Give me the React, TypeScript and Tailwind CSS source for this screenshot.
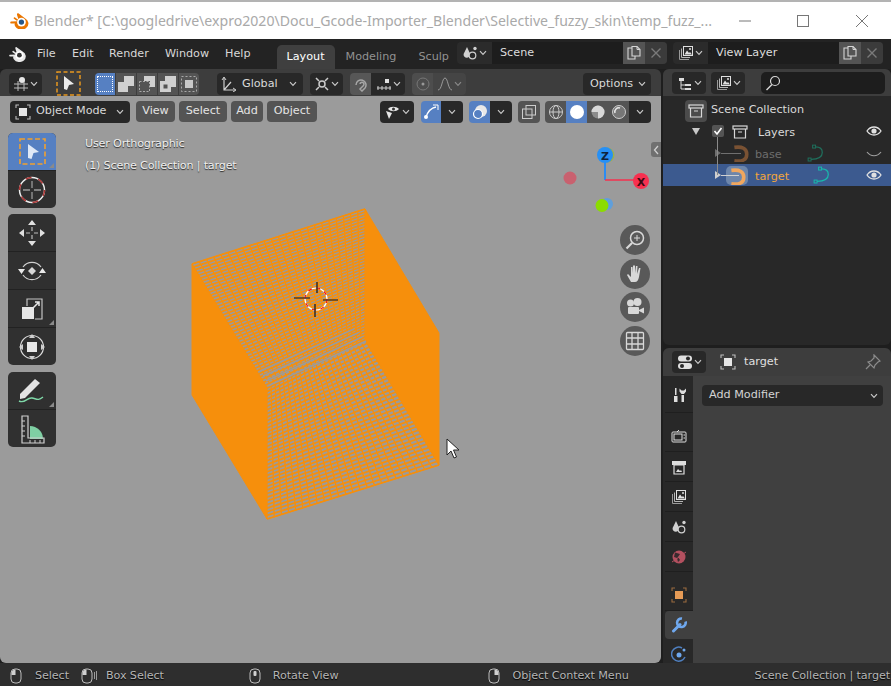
import type { ReactNode } from 'react';

type P = [number, number];

// hatch lines between two opposite edges of a quad
function hatch(a: P, b: P, c: P, d: P, n: number) {
  let s = '';
  for (let i = 0; i <= n; i++) {
    const t = i / n;
    s += `M${a[0] + (d[0] - a[0]) * t} ${a[1] + (d[1] - a[1]) * t}L${b[0] + (c[0] - b[0]) * t} ${b[1] + (c[1] - b[1]) * t}`;
  }
  return s;
}

function Ico({ children, size = 16, className = '' }: { children: ReactNode; size?: number; className?: string }) {
  return (
    <svg width={size} height={size} viewBox="0 0 16 16" fill="none" className={`shrink-0 ${className}`}>
      {children}
    </svg>
  );
}

function Chev({ color = '#c8c8c8' }: { color?: string }) {
  return (
    <svg width="8" height="6" viewBox="0 0 8 6" fill="none" className="shrink-0">
      <path d="M1 1.2 4 4.4 7 1.2" stroke={color} strokeWidth="1.2" />
    </svg>
  );
}

function BlenderLogo({ color, eye, size = 22 }: { color: string; eye: string; size?: number }) {
  return (
    <svg width={size} height={size * 0.8} viewBox="0 0 25 20" className="shrink-0">
      <path d="M9.5 1.5 17 7a8 7 0 1 1-11 9.5C5 15 5 14 5.6 13L1 13c-1 0-1-2 0-2.2l7.5-.2L4.5 7.8C3.6 7 4.6 5.6 5.7 6.2L9.8 9l-1.8-5.6C7.6 2 8.6 1 9.5 1.5Z" fill={color} />
      <circle cx="13" cy="11.5" r="5" fill="#fff" />
      <circle cx="13" cy="11.5" r="3" fill={eye} />
    </svg>
  );
}

function ObjectIcon({ fill = '#e6e6e6', corner = '#bdbdbd' }: { fill?: string; corner?: string }) {
  return (
    <Ico>
      <rect x="4" y="4" width="8" height="8" fill={fill} />
      <path d="M1 4V1h3M12 1h3v3M15 12v3h-3M4 15H1v-3" stroke={corner} strokeWidth="1.1" />
    </Ico>
  );
}

function ImageStack() {
  return (
    <Ico>
      <path d="M1.5 5v9.5H11" stroke="#9a9a9a" />
      <path d="M3.5 3.5v9h8.5" stroke="#b5b5b5" />
      <rect x="5.5" y="1.5" width="9" height="9" stroke="#e0e0e0" fill="#2a2a2a" />
      <path d="M6.5 9.5 9 5.5l2 2.5 1-1 2 2.5Z" fill="#e0e0e0" />
      <circle cx="12" cy="4" r="1" fill="#e0e0e0" />
    </Ico>
  );
}

function SceneIcon() {
  return (
    <Ico>
      <path d="M5 2 8 8.5A3.3 3.3 0 1 1 1.6 9Z" fill="#d0d0d0" />
      <circle cx="10.5" cy="10.5" r="3.3" stroke="#d0d0d0" strokeWidth="1.2" fill="#2a2a2a" />
      <circle cx="13" cy="3.5" r="1.7" fill="#d0d0d0" />
    </Ico>
  );
}

function CopyIcon() {
  return (
    <Ico>
      <path d="M6 3H2v11h7v-3" stroke="#d6d6d6" strokeWidth="1.1" />
      <path d="M6 1.5h5l3 3V11H6Z" stroke="#d6d6d6" strokeWidth="1.1" />
      <path d="M11 1.5v3h3" stroke="#d6d6d6" />
    </Ico>
  );
}

function CloseIcon() {
  return (
    <svg width="10" height="10" viewBox="0 0 10 10" fill="none">
      <path d="M0.5 0.5 9.5 9.5M9.5 0.5 0.5 9.5" stroke="#7a7a7a" strokeWidth="1.4" />
    </svg>
  );
}

function Eye({ color = '#e0e0e0' }: { color?: string }) {
  return (
    <Ico>
      <path d="M1 8c2-3 4.2-4 7-4s5 1 7 4c-2 3-4.2 4-7 4s-5-1-7-4Z" stroke={color} strokeWidth="1.3" />
      <circle cx="8" cy="8" r="2.6" fill={color} />
    </Ico>
  );
}

function CollectionBox({ color = '#d8d8d8' }: { color?: string }) {
  return (
    <Ico>
      <rect x="1" y="2" width="14" height="3" stroke={color} strokeWidth="1.2" />
      <path d="M2.5 5v9h11V5M6 8h4" stroke={color} strokeWidth="1.2" />
    </Ico>
  );
}

function Curve({ color }: { color: string }) {
  return (
    <Ico size={18}>
      <rect x="5" y="1" width="2.6" height="2.6" stroke={color} strokeWidth="0.9" />
      <rect x="1" y="12.5" width="2.6" height="2.6" stroke={color} strokeWidth="0.9" />
      <path d="M7.6 2.5c5 0 6 2 6 5 0 4-4 6-10 6.2" stroke={color} strokeWidth="1.1" />
    </Ico>
  );
}

function CurveObj({ color }: { color: string }) {
  return (
    <Ico size={18}>
      <path d="M3 3c7-1 11 1 11 6s-4 7-11 6" stroke={color} strokeWidth="3.2" />
    </Ico>
  );
}

function Dark({ className = '', children }: { className?: string; children: ReactNode }) {
  return <div className={`flex items-center h-[22px] rounded-[4px] bg-[#282828] text-[#d9d9d9] ${className}`}>{children}</div>;
}

function MenuBtn({ label, w }: { label: string; w: string }) {
  return <div className={`flex items-center justify-center h-[21px] rounded-[4px] bg-[#545454] text-[#e4e4e4] ${w}`}>{label}</div>;
}

function ModeBtn({ children, active }: { children: ReactNode; active?: boolean }) {
  return (
    <div className={`flex items-center justify-center w-[20px] h-[22px] ${active ? 'bg-[#5680c2]' : 'bg-[#545454]'}`}>{children}</div>
  );
}

function ToolCell({ children, active, corner }: { children: ReactNode; active?: boolean; corner?: boolean }) {
  return (
    <div className={`relative flex items-center justify-center h-[38px] last:h-[37px] border-b border-[#222] last:border-b-0 ${active ? 'bg-[#5680c2]' : ''}`}>
      {children}
      {corner && <span className="absolute right-[2px] bottom-[2px] w-0 h-0 border-l-[5px] border-l-transparent border-b-[5px] border-b-[#8a8a8a]" />}
    </div>
  );
}

function NavBtn({ children }: { children: ReactNode }) {
  return <div className="flex items-center justify-center w-[30px] h-[30px] rounded-full bg-[#595959]">{children}</div>;
}

function Row({ children, selected, text }: { children: ReactNode; selected?: boolean; text?: string }) {
  return (
    <div className={`relative h-[22px] flex items-center ${selected ? 'bg-[#3c5a8f]' : ''} ${text ?? ''}`}>{children}</div>
  );
}

function Tab({ children, active, h = 'h-[30px]', pt = '' }: { children: ReactNode; active?: boolean; h?: string; pt?: string }) {
  return (
    <div className={`flex items-center justify-center ml-[2px] ${h} ${pt} ${active ? 'bg-[#404040] rounded-l-[4px]' : 'border-b border-[#1f1f1f]'}`}>
      {children}
    </div>
  );
}

function Mouse({ side }: { side: 'l' | 'm' | 'r' }) {
  return (
    <svg width="12" height="16" viewBox="0 0 12 16" fill="none" className="shrink-0">
      <rect x="1" y="1" width="10" height="14" rx="4" stroke="#bdbdbd" />
      {side === 'l' && <path d="M1.5 7V5a4 4 0 0 1 4-3.5V7Z" fill="#d0d0d0" />}
      {side === 'r' && <path d="M10.5 7V5a4 4 0 0 0-4-3.5V7Z" fill="#d0d0d0" />}
      {side === 'm' && <rect x="4.5" y="3" width="3" height="5" rx="1" fill="#d0d0d0" />}
    </svg>
  );
}

const orange = '#f68f0c';
const shadow = '[text-shadow:0_1px_1px_#000]';

function Cube() {
  const tl: P = [192, 264];
  const t: P = [365, 209];
  const mr: P = [365, 340];
  const c: P = [267, 388];
  const r: P = [439, 465];
  const b: P = [267, 519];
  return (
    <svg className="absolute left-0 top-0 pointer-events-none" width="661" height="567" viewBox="0 96 661 567">
      <path d={hatch(tl, t, mr, c, 44)} stroke={orange} strokeWidth="1.7" />
      <path d={hatch(c, mr, r, b, 36)} stroke={orange} strokeWidth="1.7" />
      <path d={hatch(tl, c, mr, t, 24)} stroke={orange} strokeWidth="1.3" />
      <path d={hatch(c, b, r, mr, 24)} stroke={orange} strokeWidth="1.3" />
      <polygon points="192,264 267,388 267,519 192,395" fill={orange} />
      <polygon points="365,209 439,333 439,465 365,340" fill={orange} />
      <path d="M268 386 366 341M266 381 362 337M263 376 358 333M260 371 354 329" stroke="#9b9b9b" strokeWidth="1.6" />
      <path d="M192 264 365 209 439 333 439 465 267 519 192 395Z" stroke={orange} strokeWidth="1" fill="none" />
    </svg>
  );
}

function Cursor3D() {
  return (
    <svg className="absolute left-[292px] top-[179px]" width="48" height="48" viewBox="0 0 48 48" fill="none">
      <circle cx="24" cy="24" r="11" stroke="#fff" strokeWidth="1.2" />
      <circle cx="24" cy="24" r="11" stroke="#f01010" strokeWidth="1.2" strokeDasharray="4 4.64" />
      <path d="M2 23h16M31 25h15M25 7v11M23 29v13" stroke="#111" strokeWidth="1.2" />
    </svg>
  );
}

function Gizmo() {
  return (
    <svg className="absolute left-[555px] top-[44px]" width="100" height="80" viewBox="555 140 100 80" fill="none">
      <circle cx="570" cy="178" r="6.5" fill="#c9616f" />
      <circle cx="607" cy="204" r="6" fill="#5f9fdc" />
      <circle cx="607" cy="155" r="7.5" fill="#9cb14c" />
      <path d="M605 180V160" stroke="#2b8cf4" strokeWidth="2" />
      <path d="M605 180H635" stroke="#f6304e" strokeWidth="1.6" />
      <circle cx="605" cy="155" r="8" fill="#2790f5" />
      <circle cx="641" cy="181" r="8" fill="#f7304f" />
      <circle cx="602" cy="205.5" r="6.5" fill="#8bdc00" />
      <text x="605" y="159.5" textAnchor="middle" fontSize="11" fontWeight="700" fill="#10233c" fontFamily="DejaVu Sans, sans-serif">Z</text>
      <text x="641" y="185.5" textAnchor="middle" fontSize="11" fontWeight="700" fill="#3d0a12" fontFamily="DejaVu Sans, sans-serif">X</text>
    </svg>
  );
}

export default function App() {
  return (
    <div className="w-[891px] h-[686px] overflow-hidden flex flex-col bg-[#1e1e1e] font-['DejaVu_Sans',sans-serif] text-[11.2px] text-[#d9d9d9]">
      {/* window title bar */}
      <div className="h-[39px] shrink-0 border-t-2 border-[#b3b3b3] bg-white flex items-center pl-[10px] font-['Noto_Sans',sans-serif] text-[14.1px] text-[#a9a9a9]">
        <BlenderLogo color="#ea7600" eye="#265787" />
        <span className="ml-[2px] w-[701px] whitespace-nowrap">
          Blender* [C:\googledrive\expro2020\Docu_Gcode-Importer_Blender\Selective_fuzzy_skin\temp_fuzz_...
        </span>
        <svg className="ml-[4px]" width="130" height="16" viewBox="0 0 130 16" fill="none" stroke="#777">
          <path d="M0 8H12" />
          <rect x="58.5" y="2.5" width="11" height="11" />
          <path d="M117 2 129 14M129 2 117 14" />
        </svg>
      </div>

      {/* top bar */}
      <div className="h-[30px] shrink-0 bg-[#232323] flex items-center relative">
        <div className="ml-[9px] w-[20px]"><BlenderLogo color="#e8e8e8" eye="#333" size={20} /></div>
        <div className="flex items-center ml-[8px] text-[#d8d8d8]">
          <span className="w-[35px]">File</span>
          <span className="w-[37px]">Edit</span>
          <span className="w-[56px]">Render</span>
          <span className="w-[60px]">Window</span>
          <span>Help</span>
        </div>
        <div className="ml-[26px] self-end flex items-center h-[24px] w-[58px] justify-center rounded-t-[5px] bg-[#3f3f3f] text-white">Layout</div>
        <div className="self-end flex items-center h-[24px] ml-[11px] text-[#929292]">Modeling</div>
        <div className="self-end flex items-center h-[24px] ml-[22px] w-[31px] overflow-hidden text-[#929292]">Sculp</div>
        <div className="absolute left-[457px] top-[3px] h-[22px] w-[210px] flex items-center rounded-[4px] bg-[#2b2b2b]">
          <div className="w-[35px] flex items-center justify-center gap-[1px]"><SceneIcon /><Chev /></div>
          <div className="flex-1 h-full bg-[#1d1d1d] flex items-center pl-[8px] text-[#dcdcdc]">Scene</div>
          <div className="w-[22px] h-full bg-[#545454] flex items-center justify-center"><CopyIcon /></div>
          <div className="w-[22px] h-full bg-[#3b3b3b] rounded-r-[4px] flex items-center justify-center"><CloseIcon /></div>
        </div>
        <div className="absolute left-[673px] top-[3px] h-[22px] w-[210px] flex items-center rounded-[4px] bg-[#2b2b2b]">
          <div className="w-[35px] flex items-center justify-center gap-[1px]"><ImageStack /><Chev /></div>
          <div className="flex-1 h-full bg-[#1d1d1d] flex items-center pl-[8px] text-[#dcdcdc]">View Layer</div>
          <div className="w-[22px] h-full bg-[#545454] flex items-center justify-center"><CopyIcon /></div>
          <div className="w-[22px] h-full bg-[#3b3b3b] rounded-r-[4px] flex items-center justify-center"><CloseIcon /></div>
        </div>
      </div>

      <div className="flex-1 flex min-h-0 gap-[2px]">
        {/* 3d viewport */}
        <div className="w-[661px] flex flex-col rounded-[6px] overflow-hidden">
          <div className="h-[27px] shrink-0 bg-[#3d3d3d] flex items-center pl-[9px] pt-[3px]">
            <Dark className="w-[33px] justify-center gap-[1px]">
              <Ico>
                <path d="M1 8h14M1 12h14M5 5v10M11 5v10" stroke="#bbb" />
                <circle cx="9" cy="4" r="3" fill="#e6e6e6" />
              </Ico>
              <Chev />
            </Dark>
            <svg className="ml-[14px] -mt-[2px]" width="25" height="25" viewBox="0 0 25 25" fill="none">
              <rect x="1" y="1" width="23" height="23" stroke="#e8981f" strokeWidth="1.5" strokeDasharray="4 2.5" />
              <path d="M8 5 18 13 13 14 11 19 8 18Z" fill="#ececec" />
            </svg>
            <div className="ml-[14px] flex rounded-[4px] overflow-hidden gap-[1px]">
              <ModeBtn active><span className="w-[16px] h-[16px] border border-dotted border-white" /></ModeBtn>
              <ModeBtn><Ico><path d="M0 6h6V0h10v10H10v6H0Z" fill="#d0d0d0" /></Ico></ModeBtn>
              <ModeBtn><Ico><path d="M5 0h11v11H11V5H5Z" fill="#d0d0d0" /><rect x="0.5" y="5.5" width="10" height="10" stroke="#aaa" strokeDasharray="2 1.5" /></Ico></ModeBtn>
              <ModeBtn><Ico><path d="M5 0h11v11H11V5H5Z" fill="#d0d0d0" /><path d="M0 5h11v11H0ZM3.5 8.5v4h4v-4Z" fill="#d0d0d0" fillRule="evenodd" /></Ico></ModeBtn>
              <ModeBtn><Ico><rect x="0.5" y="0.5" width="15" height="15" stroke="#aaa" strokeDasharray="2 2" /><rect x="4" y="4" width="8" height="8" fill="#c8c8c8" /></Ico></ModeBtn>
            </div>
            <Dark className="ml-[18px] w-[86px] pl-[4px] pr-[6px]">
              <Ico><path d="M3 2v12h11M3 14l7-8" stroke="#cfcfcf" strokeWidth="1.2" /><path d="M1 4l2-3 2 3M12 12l3 2-3 2" stroke="#cfcfcf" /></Ico>
              <span className="ml-[5px] flex-1">Global</span>
              <Chev />
            </Dark>
            <Dark className="ml-[7px] w-[33px] justify-center gap-[1px]">
              <Ico><circle cx="8" cy="8" r="3" stroke="#ccc" strokeWidth="1.5" /><path d="M2 2l3 3M14 2l-3 3M2 14l3-3M14 14l-3-3" stroke="#ccc" strokeWidth="1.5" /></Ico>
              <Chev />
            </Dark>
            <div className="ml-[7px] flex h-[22px] rounded-[4px] overflow-hidden">
              <div className="w-[21px] bg-[#575757] flex items-center justify-center">
                <Ico><path d="M3 9a5 5 0 1 1 9 3l-3 3-2-2 3-3a2 2 0 1 0-3-2" stroke="#a6a6a6" strokeWidth="1.5" /></Ico>
              </div>
              <div className="w-[34px] bg-[#282828] flex items-center justify-center gap-[1px]">
                <Ico><path d="M1 12h14M2 10v4M6 10v4M10 10v4M14 10v4" stroke="#ccc" /><rect x="9" y="3" width="4" height="4" fill="#e0e0e0" /></Ico>
                <Chev />
              </div>
            </div>
            <div className="ml-[7px] flex h-[22px] rounded-[4px] overflow-hidden">
              <div className="w-[21px] bg-[#4d4d4d] flex items-center justify-center">
                <Ico><circle cx="8" cy="8" r="6" stroke="#777" /><circle cx="8" cy="8" r="1.5" fill="#999" /></Ico>
              </div>
              <div className="w-[33px] bg-[#454545] flex items-center justify-center gap-[1px]">
                <Ico><path d="M1 14C5 14 5 2 8 2s3 12 7 12" stroke="#999" /></Ico>
                <Chev color="#888" />
              </div>
            </div>
            <Dark className="ml-auto mr-[10px] w-[68px] pl-[7px] pr-[5px] justify-between"><span>Options</span><Chev /></Dark>
          </div>

          <div className="flex-1 relative bg-[#9b9b9b] min-h-0">
            <Cube />
            <div className="absolute left-[85px] top-[37px] text-[#efefef] leading-[22px] tracking-[-0.2px] [text-shadow:0_1px_1px_#222]">
              <div>User Orthographic</div>
              <div>(1) Scene Collection | target</div>
            </div>
            <Cursor3D />
            <Gizmo />

            {/* tool header */}
            <div className="relative flex items-center h-[29px] pl-[10px] pt-[2px]">
              <Dark className="w-[120px] pl-[5px] pr-[6px]">
                <ObjectIcon />
                <span className="ml-[5px] flex-1">Object Mode</span>
                <Chev />
              </Dark>
              <div className="ml-[6px] flex gap-[4px]">
                <MenuBtn label="View" w="w-[39px]" />
                <MenuBtn label="Select" w="w-[48px]" />
                <MenuBtn label="Add" w="w-[32px]" />
                <MenuBtn label="Object" w="w-[50px]" />
              </div>
              <Dark className="ml-[63px] w-[34px] justify-center gap-[1px]">
                <Ico><path d="M3 5c2-3 8-3 11 0-3 3-8 3-11 0Z" fill="#e6e6e6" /><circle cx="8.5" cy="5" r="1.5" fill="#333" /><path d="M1 7 7 9 4 15Z" fill="#e6e6e6" /></Ico>
                <Chev />
              </Dark>
              <div className="ml-[7px] flex h-[22px] rounded-[4px] overflow-hidden">
                <div className="w-[20px] bg-[#5680c2] flex items-center justify-center">
                  <Ico><path d="M3 13C5 7 8 4 13 3" stroke="#fff" strokeWidth="1.3" /><circle cx="3" cy="13" r="2" fill="#fff" /><path d="M10 1h5v5" stroke="#fff" /></Ico>
                </div>
                <div className="w-[22px] bg-[#282828] flex items-center justify-center"><Chev /></div>
              </div>
              <div className="ml-[6px] flex h-[22px] rounded-[4px] overflow-hidden">
                <div className="w-[21px] bg-[#5680c2] flex items-center justify-center">
                  <Ico><circle cx="9" cy="7" r="6" fill="#e8e8e8" /><circle cx="6" cy="10" r="4.5" stroke="#fff" strokeWidth="1.2" fill="#5680c2" /></Ico>
                </div>
                <div className="w-[22px] bg-[#282828] flex items-center justify-center"><Chev /></div>
              </div>
              <div className="ml-[6px] w-[22px] h-[22px] rounded-[4px] bg-[#545454] flex items-center justify-center">
                <Ico><rect x="5" y="1.5" width="9.5" height="9.5" stroke="#ccc" /><rect x="1.5" y="5" width="9.5" height="9.5" stroke="#ccc" /></Ico>
              </div>
              <div className="ml-[5px] flex h-[22px] rounded-[4px] overflow-hidden">
                <div className="w-[21px] bg-[#545454] flex items-center justify-center">
                  <Ico><circle cx="8" cy="8" r="6.5" stroke="#ccc" /><ellipse cx="8" cy="8" rx="3" ry="6.5" stroke="#ccc" /><path d="M1.5 8h13" stroke="#ccc" /></Ico>
                </div>
                <div className="w-[21px] bg-[#5680c2] flex items-center justify-center"><span className="w-[14px] h-[14px] rounded-full bg-white" /></div>
                <div className="w-[21px] bg-[#545454] flex items-center justify-center">
                  <Ico><circle cx="8" cy="8" r="6.5" fill="#8c8c8c" /><path d="M8 1.5a6.5 6.5 0 0 1 0 13V8H1.5A6.5 6.5 0 0 1 8 1.5Z" fill="#d8d8d8" /></Ico>
                </div>
                <div className="w-[21px] bg-[#545454] flex items-center justify-center">
                  <Ico><circle cx="8" cy="8" r="6.5" fill="#777" stroke="#ccc" /><path d="M4 9a4 4 0 0 1 5-5" stroke="#e8e8e8" strokeWidth="1.5" /></Ico>
                </div>
                <div className="w-[22px] bg-[#282828] flex items-center justify-center"><Chev /></div>
              </div>
            </div>

            {/* tools */}
            <div className="absolute left-[8px] top-[37px] w-[48px] flex flex-col gap-[6px]">
              <div className="rounded-[5px] overflow-hidden bg-[#303030]">
                <ToolCell active corner>
                  <svg width="27" height="27" viewBox="0 0 27 27" fill="none">
                    <rect x="1" y="1" width="25" height="25" stroke="#f0a030" strokeWidth="1.6" strokeDasharray="5 2.5" />
                    <path d="M9 6 20 14 14.5 15 12.5 21 9 20Z" fill="#dfe8f6" />
                  </svg>
                </ToolCell>
                <ToolCell>
                  <svg width="28" height="28" viewBox="0 0 28 28" fill="none">
                    <circle cx="14" cy="14" r="12.5" stroke="#eee" strokeWidth="1.5" />
                    <circle cx="14" cy="14" r="12.5" stroke="#a33" strokeWidth="1.5" strokeDasharray="6 7" />
                    <path d="M14 5v7M14 16v7M5 14h7M16 14h7" stroke="#9a9a9a" strokeWidth="1.3" />
                  </svg>
                </ToolCell>
              </div>
              <div className="rounded-[5px] overflow-hidden bg-[#303030]">
                <ToolCell>
                  <svg width="28" height="28" viewBox="0 0 28 28" fill="#e0e0e0">
                    <path d="M14 1l4 5h-8ZM14 27l4-5h-8ZM1 14l5-4v8ZM27 14l-5-4v8Z" />
                    <path d="M14 8v4M14 16v4M8 14h4M16 14h4" stroke="#bbb" strokeWidth="1.2" />
                  </svg>
                </ToolCell>
                <ToolCell>
                  <svg width="28" height="28" viewBox="0 0 28 28" fill="none">
                    <path d="M5 10A11 11 0 0 1 23 10M23 18A11 11 0 0 1 5 18" stroke="#cfcfcf" strokeWidth="1.2" />
                    <path d="M14 10l4 4-4 4-4-4Z" fill="#d8d8d8" />
                    <path d="M0 12h7l-3.5 5ZM28 16h-7l3.5-5Z" fill="#e8e8e8" />
                  </svg>
                </ToolCell>
                <ToolCell corner>
                  <svg width="24" height="24" viewBox="0 0 24 24" fill="none">
                    <rect x="2" y="10" width="12" height="12" fill="#e6e6e6" />
                    <path d="M7 9V2h15v20h-7" stroke="#c4c4c4" strokeWidth="1.2" />
                    <path d="M13 11l6-6M15 5h4v4" stroke="#e6e6e6" strokeWidth="1.5" />
                  </svg>
                </ToolCell>
                <ToolCell>
                  <svg width="28" height="28" viewBox="0 0 28 28" fill="none">
                    <circle cx="14" cy="14" r="11.5" stroke="#ddd" strokeWidth="1.2" />
                    <rect x="9" y="9" width="10" height="10" fill="#e8e8e8" />
                    <path d="M14 1l3 4h-6ZM14 27l3-4h-6ZM1 14l4-3v6ZM27 14l-4-3v6Z" fill="#cfcfcf" />
                  </svg>
                </ToolCell>
              </div>
              <div className="mt-[1px] rounded-[5px] overflow-hidden bg-[#303030]">
                <ToolCell corner>
                  <svg width="30" height="28" viewBox="0 0 30 28" fill="none">
                    <path d="M3 17 18 2l5 4L8 21l-5 1Z" fill="#e4e4e4" />
                    <path d="M2 24c6 3 8-4 13-3s6 3 11-1" stroke="#7fd8a8" strokeWidth="1.4" />
                  </svg>
                </ToolCell>
                <ToolCell>
                  <svg width="28" height="30" viewBox="0 0 28 30" fill="none">
                    <path d="M12 12a13 13 0 0 1 13 13H12Z" fill="#7fd0a4" />
                    <path d="M4 2h6v22h16v5H4Z" stroke="#d0d0d0" strokeWidth="1.2" />
                    <path d="M4 7h3M4 12h3M4 17h3M4 22h3M12 29v-3M17 29v-3M22 29v-3" stroke="#d0d0d0" />
                  </svg>
                </ToolCell>
              </div>
            </div>

            {/* nav gizmos */}
            <div className="absolute left-[620px] top-[129px] flex flex-col gap-[3.5px]">
              <NavBtn><svg width="20" height="20" viewBox="0 0 20 20" fill="none"><circle cx="12" cy="8" r="6.5" stroke="#d8d8d8" strokeWidth="1.5" /><path d="M7 13 1.5 18.5" stroke="#d8d8d8" strokeWidth="2.2" /><path d="M12 5v6M9 8h6" stroke="#d8d8d8" /></svg></NavBtn>
              <NavBtn><svg width="20" height="20" viewBox="0 0 20 20" fill="#d8d8d8"><path d="M6 18 2 11l1-1 3 3V3h1.5l.5 6V1.5h2V9l1-7h1.5L12 10l2-6h1.5L14 13c-.5 3-2 5-4 5Z" /></svg></NavBtn>
              <NavBtn><svg width="20" height="20" viewBox="0 0 20 20" fill="#d8d8d8"><circle cx="5.5" cy="6" r="3.5" /><circle cx="12.5" cy="5" r="4" /><rect x="3" y="10" width="11" height="7" rx="1" /><path d="M14 13l5-2.5v6L14 14Z" /></svg></NavBtn>
              <NavBtn><svg width="20" height="20" viewBox="0 0 20 20" fill="none" stroke="#d8d8d8" strokeWidth="1.3"><rect x="1.5" y="1.5" width="17" height="17" rx="1" /><path d="M7 1.5v17M13 1.5v17M1.5 7h17M1.5 13h17" /></svg></NavBtn>
            </div>

            {/* sidebar tab and pointer */}
            <div className="absolute right-0 top-[46px] w-[10px] h-[15px] rounded-l-[3px] bg-[#707070] flex items-center justify-center">
              <svg width="6" height="10" viewBox="0 0 6 10" fill="none"><path d="M5 1 1.5 5 5 9" stroke="#cfcfcf" strokeWidth="1.3" /></svg>
            </div>
            <svg className="absolute left-[446px] top-[342px]" width="14" height="21" viewBox="0 0 14 21">
              <path d="M1 1v16l4-4 3 7 2.5-1-3-7h5.5Z" fill="#fff" stroke="#222" strokeWidth="1" />
            </svg>
          </div>
        </div>

        {/* right column */}
        <div className="flex-1 flex flex-col gap-[3px] min-w-0">
          {/* outliner */}
          <div className="h-[276px] flex flex-col rounded-[6px] overflow-hidden bg-[#282828]">
            <div className="h-[27px] shrink-0 bg-[#3d3d3d] flex items-center pl-[9px]">
              <Dark className="w-[34px] justify-center gap-[1px]">
                <Ico><path d="M2 3h5v3H2ZM8 9h6v2H8ZM8 13h6v2H8Z" fill="#ddd" /><path d="M4 6v8h4M4 10h4" stroke="#ddd" /></Ico>
                <Chev />
              </Dark>
              <Dark className="ml-[5px] w-[34px] justify-center gap-[1px]"><ImageStack /><Chev /></Dark>
              <div className="ml-[16px] w-[124px] h-[22px] rounded-[5px] bg-[#1d1d1d] flex items-center pl-[4px]">
                <Ico><circle cx="10" cy="6" r="4.5" stroke="#d6d6d6" strokeWidth="1.2" /><path d="M7 9.5 1.5 15" stroke="#d6d6d6" strokeWidth="1.5" /></Ico>
              </div>
            </div>
            <div className="pt-[2px] relative">
              <Row>
                <div className="ml-[22px] mt-[3px] w-[22px] h-[22px] rounded-[4px] bg-[#4b4b4b] flex items-center justify-center"><CollectionBox /></div>
                <span className="ml-[4px] mt-[3px]">Scene Collection</span>
              </Row>
              <Row>
                <svg className="absolute left-[29px] top-[8px]" width="8" height="7" viewBox="0 0 8 7"><path d="M0 0h8L4 7Z" fill="#c8c8c8" /></svg>
                <span className="absolute left-[49px] top-[5px] w-[12px] h-[12px] rounded-[2px] bg-[#545454] flex items-center justify-center">
                  <svg width="10" height="10" viewBox="0 0 10 10" fill="none"><path d="M1.5 5 4 8l4.5-6" stroke="#fff" strokeWidth="1.6" /></svg>
                </span>
                <span className="absolute left-[69px] top-[4px]"><CollectionBox /></span>
                <span className="absolute left-[95px] top-[5px]">Layers</span>
                <span className="absolute right-[9px] top-[3px]"><Eye /></span>
              </Row>
              <Row text="text-[#6d6d6d]">
                <span className="absolute left-[52px] top-[7px] w-0 h-0 border-y-[4px] border-y-transparent border-l-[6px] border-l-[#6f6f6f]" />
                <span className="absolute left-[58px] top-[11px] w-[20px] h-px bg-[#6f6f6f]" />
                <span className="absolute left-[68px] top-[2px]"><CurveObj color="#7a5233" /></span>
                <span className="absolute left-[92px] top-[5px]">base</span>
                <span className="absolute left-[144px] top-[2px]"><Curve color="#1f6f5c" /></span>
                <span className="absolute right-[9px] top-[7px]">
                  <svg width="16" height="10" viewBox="0 0 16 10" fill="none"><path d="M1 3c4 5 10 5 14 0" stroke="#a0a0a0" strokeWidth="1.2" /></svg>
                </span>
              </Row>
              <Row selected text="text-[#f2a53c]">
                <span className="absolute left-[52px] top-[7px] w-0 h-0 border-y-[4px] border-y-transparent border-l-[6px] border-l-[#d0d0d0]" />
                <span className="absolute left-[63px] top-[2px] w-[22px] h-[19px] rounded-[5px] bg-[#6d86ab] flex items-center justify-center"><CurveObj color="#f0a75f" /></span>
                <span className="absolute left-[58px] top-[11px] w-[18px] h-px bg-[#d0d0d0]" />
                <span className="absolute left-[92px] top-[5px]">target</span>
                <span className="absolute left-[150px] top-[2px]"><Curve color="#19b9ac" /></span>
                <span className="absolute right-[9px] top-[3px]"><Eye /></span>
              </Row>
              <span className="absolute left-[54px] top-[41px] w-px h-[38px] bg-[#8a8a8a]" />
            </div>
          </div>

          {/* properties */}
          <div className="flex-1 flex flex-col rounded-t-[6px] overflow-hidden bg-[#282828] min-h-0">
            <div className="h-[28px] shrink-0 bg-[#3d3d3d] flex items-center pl-[9px] relative">
              <Dark className="w-[34px] justify-center gap-[1px]">
                <Ico>
                  <rect x="1" y="1.5" width="14" height="6" rx="3" fill="#e0e0e0" />
                  <rect x="1" y="9" width="14" height="6" rx="3" fill="#e0e0e0" />
                  <circle cx="11" cy="4.5" r="2" fill="#282828" />
                  <circle cx="5" cy="12" r="2" fill="#282828" />
                </Ico>
                <Chev />
              </Dark>
              <span className="ml-[14px]"><ObjectIcon /></span>
              <span className="ml-[8px] text-[#e0e0e0]">target</span>
              <span className="absolute right-[10px] top-[6px]">
                <Ico><path d="M9 1l6 6-2 1-3 3-1 3-6-6 3-1 3-3ZM5 11 1 15" stroke="#8a8a8a" strokeWidth="1.2" /></Ico>
              </span>
            </div>
            <div className="flex-1 flex min-h-0 overflow-hidden">
              <div className="w-[30px] shrink-0">
                <Tab h="h-[37px]" pt="pt-[1px]">
                  <Ico>
                    <path d="M3 9h3.500v6H3ZM4 1h1.500v7H4Z" fill="#ddd" />
                    <path d="M10.5 8h2.500v7h-2.500ZM8.500 1.500v3l2 2.500h2.500l2-2.500v-3l-2 2h-2.500Z" fill="#ddd" />
                  </Ico>
                </Tab>
                <Tab h="h-[39px]" pt="pt-[7px]">
                  <Ico><rect x="1" y="4" width="14" height="10" rx="1" stroke="#ddd" /><rect x="3" y="6" width="8" height="6" stroke="#ddd" /><path d="M12.5 7h1.5M12.5 10h1.5M6 4l2-2" stroke="#ddd" /></Ico>
                </Tab>
                <Tab h="h-[30px]">
                  <Ico><rect x="1" y="2" width="14" height="4" fill="#ddd" /><path d="M3 6h10v9H3Z" stroke="#ddd" strokeWidth="1.2" /><path d="M5 13l2-3 2 2 1-1 1 2Z" fill="#ddd" /></Ico>
                </Tab>
                <Tab h="h-[30px]"><ImageStack /></Tab>
                <Tab h="h-[30px]"><SceneIcon /></Tab>
                <Tab h="h-[30px]">
                  <Ico><circle cx="8" cy="8" r="6.5" fill="#b3505f" /><path d="M4 3.5 9 5l-2 3 2 3-2 2-1-4-3-1Z" fill="#3a2a2e" /><path d="M1 13 15 3" stroke="#b3505f" /></Ico>
                </Tab>
                <Tab h="h-[39px]" pt="pt-[7px]">
                  <ObjectIcon fill="#e59a55" corner="#9a6a3e" />
                </Tab>
                <Tab active h="h-[28px]">
                  <Ico>
                    <path d="M2.5 14 9 7.5" stroke="#6fa8ee" strokeWidth="3" strokeLinecap="round" />
                    <path d="M14.5 4.500A4.300 4.300 0 1 1 11 1.500" stroke="#6fa8ee" strokeWidth="2.600" />
                  </Ico>
                </Tab>
                <Tab h="h-[30px]">
                  <Ico><path d="M14 11a7 7 0 1 1-3-9" stroke="#4f7fbf" strokeWidth="1.5" /><circle cx="8" cy="9" r="2.5" fill="#6fa8ee" /><circle cx="13" cy="4" r="1.5" fill="#6fa8ee" /></Ico>
                </Tab>
              </div>
              <div className="flex-1 bg-[#404040] pl-[9px] pt-[9px]">
                <div className="w-[181px] h-[21px] rounded-[4px] bg-[#282828] flex items-center justify-between pl-[7px] pr-[5px] text-[#d4d4d4]">
                  <span>Add Modifier</span>
                  <Chev />
                </div>
              </div>
            </div>
          </div>
        </div>
      </div>

      {/* status bar */}
      <div className={`h-[23px] shrink-0 bg-[#2e2e2e] relative flex items-center pt-[3px] text-[#b5b5b5] tracking-[-0.1px] ${shadow}`}>
        <span className="ml-[10px]"><Mouse side="l" /></span>
        <span className="ml-[13px]">Select</span>
        <span className="ml-[12px]"><Mouse side="l" /></span>
        <svg className="ml-[1px]" width="3" height="10" viewBox="0 0 3 10"><path d="M0.5 1v7M2.5 0v9" stroke="#9a9a9a" /></svg>
        <span className="ml-[9px]">Box Select</span>
        <span className="ml-[85px]"><Mouse side="m" /></span>
        <span className="ml-[12px]">Rotate View</span>
        <span className="ml-[150px]"><Mouse side="r" /></span>
        <span className="ml-[12px]">Object Context Menu</span>
        <span className="ml-auto mr-[1px]">Scene Collection | target</span>
      </div>
    </div>
  );
}
